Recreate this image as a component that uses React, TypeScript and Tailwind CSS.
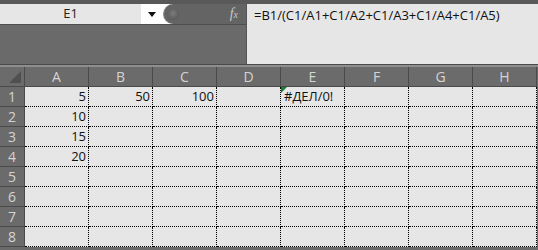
import React from 'react'

const cols = ['A', 'B', 'C', 'D', 'E', 'F', 'G', 'H']
const rows = [1, 2, 3, 4, 5, 6, 7, 8]

const values: Record<string, string> = {
  A1: '5',
  B1: '50',
  C1: '100',
  A2: '10',
  A3: '15',
  A4: '20',
}

export default function App() {
  return (
    <div
      className="w-[538px] h-[250px] overflow-hidden bg-[#6a6a6a] text-[13px]"
      style={{ fontFamily: '"Open Sans", "Noto Sans", sans-serif' }}
    >
      {/* Top bar: name box + formula bar */}
      <div className="h-[4px] bg-[#595959]" />
      <div className="flex h-[60px]">
        <div className="w-[246px] flex flex-col">
          <div className="flex h-[20px]">
            <div className="w-[141px] bg-[#e6e6e6] flex items-center justify-center text-[#222]">
              E1
            </div>
            <div className="flex-1 flex bg-white">
              <div className="w-[22px] flex items-center justify-center">
                <svg width="8" height="5" viewBox="0 0 8 5">
                  <path d="M0 0 L8 0 L4 5 Z" fill="#111" />
                </svg>
              </div>
              <div className="flex-1 flex items-center bg-[#646464] rounded-l-full pl-[3px] pr-[8px] border-l border-[#8a8a8a]">
                <div className="w-[12px] h-[12px] rounded-full bg-[radial-gradient(circle_at_50%_45%,#7c7c7c,#5c5c5c_70%)]" />
                <div className="flex-1" />
                <span
                  className="italic text-[#c8c8c8] text-[14px] leading-none"
                  style={{ fontFamily: '"Liberation Serif", serif' }}
                >
                  f<span className="text-[10px]">x</span>
                </span>
              </div>
            </div>
          </div>
          <div className="h-[1px] bg-[#4e4e4e]" />
          <div className="flex-1 bg-[#6a6a6a]" />
        </div>
        <div className="flex-1 bg-[#e6e6e6] border-l border-[#555] pl-[7px] pt-[2px] text-[#111]">
          =B1/(C1/A1+C1/A2+C1/A3+C1/A4+C1/A5)
        </div>
      </div>
      <div className="h-[1px] bg-[#4a4a4a]" />
      <div className="h-[2px] bg-[#8e8e8e]" />

      {/* Grid */}
      <div className="grid grid-cols-[25px_repeat(8,64px)] auto-rows-[20px]">
        <div className="bg-[#6b6b6b] border-r border-b border-[#4a4a4a] flex items-end justify-end pr-[3px] pb-[3px]">
          <svg width="12" height="12" viewBox="0 0 12 12">
            <path d="M12 0 L12 12 L0 12 Z" fill="#505050" />
          </svg>
        </div>
        {cols.map((c) => (
          <div
            key={c}
            className="bg-[#6b6b6b] border-r border-b border-[#4a4a4a] flex items-center justify-center text-[#d4d4d4] text-[14px]"
          >
            {c}
          </div>
        ))}
        {rows.map((r) => (
          <React.Fragment key={r}>
            <div className="bg-[#6b6b6b] border-r border-b border-[#4a4a4a] flex items-center justify-center text-[#d4d4d4] text-[14px]">
              {r}
            </div>
            {cols.map((c) => {
              const id = `${c}${r}`
              const v = values[id]
              return (
                <div
                  key={id}
                  className="relative bg-[#e6e6e6] border-r border-b border-dotted border-black flex items-center justify-end px-[2px] text-[#111]"
                >
                  {id === 'E1' && (
                    <>
                      <svg className="absolute left-0 top-0" width="6" height="6" viewBox="0 0 6 6">
                        <path d="M0 0 L6 0 L0 6 Z" fill="#1f7a2c" />
                      </svg>
                      <span className="mr-auto pl-[1px]">#ДЕЛ/0!</span>
                    </>
                  )}
                  {v}
                </div>
              )
            })}
          </React.Fragment>
        ))}
      </div>
    </div>
  )
}
